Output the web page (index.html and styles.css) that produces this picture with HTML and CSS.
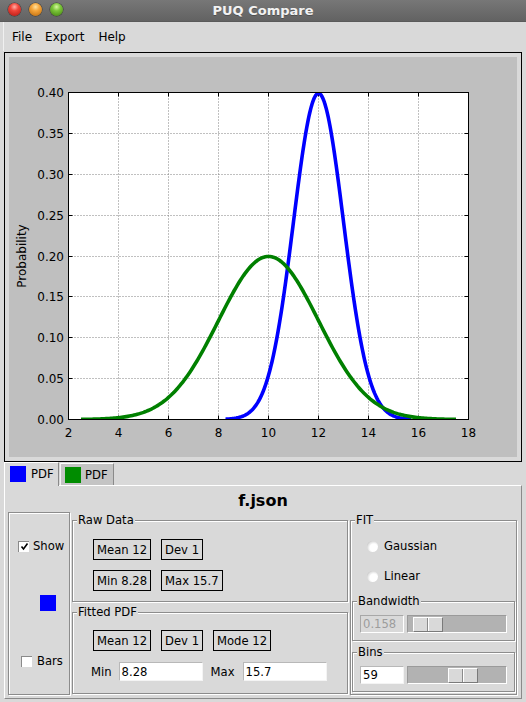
FILE: index.html
```html
<!DOCTYPE html>
<html>
<head>
<meta charset="utf-8">
<title>PUQ Compare</title>
<link rel="stylesheet" href="styles.css">
</head>
<body>
<div class="titlebar">
  <div class="lights"><span class="light red"></span><span class="light orange"></span><span class="light green"></span></div>
  <div class="title">PUQ Compare</div>
  <div></div>
</div>
<div class="menubar"><span>File</span><span>Export</span><span>Help</span></div>
<div class="plotframe">
  <svg class="plot" width="508" height="400" viewBox="0 0 508 400">
    <defs><clipPath id="axclip"><rect x="59.5" y="35.5" width="400" height="327"/></clipPath></defs>
    <rect width="508" height="400" fill="#bfbfbf"/>
    <rect x="59.5" y="35.5" width="400" height="327" fill="#fff"/>
    <g stroke="#808080" stroke-width="1" stroke-dasharray="1 2">
      <path d="M109.5 35.5V362.5M159.5 35.5V362.5M209.5 35.5V362.5M259.5 35.5V362.5M309.5 35.5V362.5M359.5 35.5V362.5M409.5 35.5V362.5"/>
      <path d="M59.5 321.5H459.5M59.5 280.5H459.5M59.5 239.5H459.5M59.5 199.5H459.5M59.5 158.5H459.5M59.5 117.5H459.5M59.5 76.5H459.5"/>
    </g>
    <g stroke="#000" stroke-width="1">
      <path d="M109.5 362.5v-4M159.5 362.5v-4M209.5 362.5v-4M259.5 362.5v-4M309.5 362.5v-4M359.5 362.5v-4M409.5 362.5v-4"/>
      <path d="M109.5 35.5v4M159.5 35.5v4M209.5 35.5v4M259.5 35.5v4M309.5 35.5v4M359.5 35.5v4M409.5 35.5v4"/>
      <path d="M59.5 321.5h4M59.5 280.5h4M59.5 239.5h4M59.5 199.5h4M59.5 158.5h4M59.5 117.5h4M59.5 76.5h4"/>
      <path d="M459.5 321.5h-4M459.5 280.5h-4M459.5 239.5h-4M459.5 199.5h-4M459.5 158.5h-4M459.5 117.5h-4M459.5 76.5h-4"/>
    </g>
    <g clip-path="url(#axclip)" fill="none" stroke-width="3.6" stroke-linejoin="round">
      <path id="curve-blue" stroke="#0000ff" d=""/>
      <path id="curve-green" stroke="#008000" d=""/>
    </g>
    <rect x="59.5" y="35.5" width="400" height="327" fill="none" stroke="#000"/>
    <g class="ticklabels" text-anchor="end">
      <text x="55" y="40">0.40</text>
      <text x="55" y="81">0.35</text>
      <text x="55" y="122">0.30</text>
      <text x="55" y="163">0.25</text>
      <text x="55" y="204">0.20</text>
      <text x="55" y="244">0.15</text>
      <text x="55" y="285">0.10</text>
      <text x="55" y="326">0.05</text>
      <text x="55" y="367">0.00</text>
    </g>
    <g class="ticklabels" text-anchor="middle">
      <text x="59.5" y="380">2</text>
      <text x="109.5" y="380">4</text>
      <text x="159.5" y="380">6</text>
      <text x="209.5" y="380">8</text>
      <text x="259.5" y="380">10</text>
      <text x="309.5" y="380">12</text>
      <text x="359.5" y="380">14</text>
      <text x="409.5" y="380">16</text>
      <text x="459.5" y="380">18</text>
    </g>
    <text class="ticklabels" x="0" y="0" text-anchor="middle" transform="translate(17 199) rotate(-90)">Probability</text>
  </svg>
</div>
<div class="tabs">
  <div class="tab active"><span class="swatch swatch-blue"></span><span class="tab-label">PDF</span></div>
  <div class="tab inactive"><span class="swatch swatch-green"></span><span class="tab-label">PDF</span></div>
</div>
<div class="panel">
  <div class="panel-title">f.json</div>
  <div class="groups">
    <div class="showbox">
      <div class="check-row show-row"><span class="checkbox"><svg width="9" height="9" viewBox="0 0 9 9"><path d="M1.5 4.5 L3.5 7 L7.5 1.5" fill="none" stroke="#000" stroke-width="1.6"/></svg></span><span>Show</span></div>
      <span class="color-square"></span>
      <div class="check-row bars-row"><span class="checkbox"></span><span>Bars</span></div>
    </div>
    <div class="midcol">
      <div class="group raw">
        <span class="gtitle">Raw Data</span>
        <div class="stat-row"><span class="stat">Mean 12</span><span class="stat">Dev 1</span></div>
        <div class="stat-row"><span class="stat">Min 8.28</span><span class="stat">Max 15.7</span></div>
      </div>
      <div class="group fitted">
        <span class="gtitle">Fitted PDF</span>
        <div class="stat-row"><span class="stat">Mean 12</span><span class="stat">Dev 1</span><span class="stat">Mode 12</span></div>
        <div class="field-row"><span class="flabel min">Min</span><span class="entry">8.28</span><span class="flabel max">Max</span><span class="entry">15.7</span></div>
      </div>
    </div>
    <div class="group fit">
      <span class="gtitle">FIT</span>
      <div class="radio-row"><span class="radio"></span><span>Gaussian</span></div>
      <div class="radio-row second"><span class="radio"></span><span>Linear</span></div>
      <div class="group sub bandwidth">
        <span class="gtitle">Bandwidth</span>
        <span class="entry small disabled">0.158</span>
        <span class="slider"><span class="handle" style="margin-left:5px"><span class="grip"></span></span></span>
      </div>
      <div class="group sub bins">
        <span class="gtitle">Bins</span>
        <span class="entry small">59</span>
        <span class="slider"><span class="handle" style="margin-left:40px"><span class="grip"></span></span></span>
      </div>
    </div>
  </div>
</div>
<script src="script.js"></script>
</body>
</html>
```

FILE: styles.css
```css
* { box-sizing: border-box; }
html, body { margin: 0; padding: 0; }
body {
  width: 526px;
  height: 702px;
  overflow: hidden;
  background: #d9d9d9;
  font-family: "DejaVu Sans", "Liberation Sans", sans-serif;
  font-size: 11.6px;
  color: #000;
}

/* title bar */
.titlebar {
  height: 22px;
  display: grid;
  grid-template-columns: 1fr auto 1fr;
  align-items: center;
  background: linear-gradient(#777777, #626262);
  border-bottom: 1px solid #5a5a5a;
}
.lights { display: flex; gap: 8px; padding-left: 8px; padding-bottom: 2px; }
.light { width: 13px; height: 13px; border-radius: 50%; box-shadow: 0 0 0 0.5px rgba(0,0,0,0.45); }
.light.red { background: radial-gradient(circle at 50% 30%, #ffb0a8 0, #f0453a 35%, #b0140e 100%); }
.light.orange { background: radial-gradient(circle at 50% 30%, #ffe2a0 0, #f5a53a 35%, #b86608 100%); }
.light.green { background: radial-gradient(circle at 50% 30%, #d8f7a0 0, #7cc63a 35%, #3f7d0c 100%); }
.title {
  color: #f2f2f2;
  font-weight: bold;
  font-size: 13px;
  padding-bottom: 1px;
  text-shadow: 0 1px 0 rgba(0,0,0,0.25);
}

/* menu */
.menubar {
  height: 29px;
  display: flex;
  align-items: center;
  gap: 13px;
  font-size: 12px;
  border-left: 1px solid #f0f0f0;
  margin-left: 3px;
  padding-left: 8px;
}
.menubar span:last-child { margin-left: 1px; }

/* plot */
.plotframe {
  margin: 1px 4px 0 4px;
  border: 1px solid #000;
  padding: 4px;
  background: #d9d9d9;
  line-height: 0;
}
.plot { display: block; }
.ticklabels, .ticklabels text {
  font-family: "DejaVu Sans", sans-serif;
  font-size: 12px;
  fill: #000;
}

/* tabs */
.tabs {
  display: flex;
  align-items: flex-end;
  height: 23px;
  padding-left: 4px;
  position: relative;
  z-index: 1;
}
.tab {
  display: flex;
  align-items: center;
  font-size: 11.6px;
}
.tab.active {
  width: 55px;
  height: 24px;
  margin-bottom: -1px;
  background: #d9d9d9;
  border-left: 1px solid #fff;
  border-top: 1px solid #fff;
  border-right: 1px solid #8a8a8a;
  padding-left: 5px;
  padding-bottom: 1px;
}
.tab.inactive {
  width: 54px;
  height: 22px;
  margin-left: 1px;
  background: #c4c4c4;
  border-left: 1px solid #f4f4f4;
  border-top: 1px solid #fff;
  border-right: 1px solid #8a8a8a;
  padding-left: 4px;
}
.swatch { width: 16px; height: 16px; display: inline-block; }
.swatch-blue { background: #0000ff; }
.swatch-green { background: #008c00; }
.tab-label { margin-left: 5px; }
.tab.inactive .tab-label { margin-left: 4px; }

/* panel */
.panel {
  margin: 0 4px;
  height: 214px;
  border-top: 1px solid #fff;
  border-left: 1px solid #fff;
  border-right: 1px solid #8a8a8a;
  border-bottom: 1px solid #8a8a8a;
}
.panel-title {
  height: 26px;
  padding-top: 3px;
  line-height: 23px;
  text-align: center;
  font-weight: bold;
  font-size: 16px;
}
.groups {
  display: flex;
  gap: 2px;
  padding: 0 4px 0 3px;
}

/* etched group boxes */
.group, .showbox {
  position: relative;
  border: 1px solid #8c8c8c;
  box-shadow: inset 1px 1px 0 #fff, 1px 1px 0 #fff;
}
.gtitle {
  position: absolute;
  top: -8px;
  left: 4px;
  height: 14px;
  line-height: 14px;
  padding: 0 1px;
  background: #d9d9d9;
  white-space: nowrap;
}

/* show box */
.showbox {
  width: 62px;
  height: 183px;
  display: flex;
  flex-direction: column;
  align-items: flex-start;
  padding: 27px 0 0 9px;
}
.check-row { display: flex; align-items: center; height: 12px; }
.checkbox {
  width: 11px;
  height: 11px;
  background: #fff;
  border-top: 1px solid #8a8a8a;
  border-left: 1px solid #8a8a8a;
  display: flex;
  align-items: center;
  justify-content: center;
}
.show-row .checkbox { margin-right: 4px; }
.bars-row { margin-top: 44px; margin-left: 3px; }
.bars-row .checkbox { margin-right: 5px; }
.color-square {
  width: 16px;
  height: 16px;
  background: #0000ff;
  margin-top: 43px;
  margin-left: 22px;
}

/* middle column */
.midcol {
  width: 276px;
  display: flex;
  flex-direction: column;
  gap: 10px;
  padding-top: 8px;
}
.group.raw {
  height: 82px;
  padding: 18px 0 0 20px;
  display: flex;
  flex-direction: column;
  gap: 10px;
}
.group.fitted {
  height: 82px;
  padding: 17px 0 0 20px;
  display: flex;
  flex-direction: column;
  gap: 11px;
}
.stat-row { display: flex; gap: 10px; }
.stat {
  height: 21px;
  border: 1px solid #000;
  padding: 0 3px;
  display: inline-flex;
  align-items: center;
  white-space: nowrap;
}
.field-row { display: flex; align-items: center; margin-left: -2px; }
.flabel.min { margin-right: 7px; }
.flabel.max { margin-left: 8px; margin-right: 8px; }
.entry {
  width: 84px;
  height: 19px;
  background: #fff;
  border: 1px solid #f4f4f4;
  border-top-color: #b8b8b8;
  border-left-color: #b8b8b8;
  padding-left: 2px;
  display: flex;
  align-items: center;
}

/* FIT box */
.group.fit {
  width: 167px;
  height: 175px;
  margin-top: 8px;
  padding: 19px 1px 0 1px;
  display: flex;
  flex-direction: column;
}
.radio-row {
  display: flex;
  align-items: center;
  gap: 6px;
  height: 12px;
  margin-left: 15px;
}
.radio-row.second { margin-top: 18px; }
.radio {
  width: 11px;
  height: 11px;
  border-radius: 50%;
  background: radial-gradient(circle at 62% 62%, #fff 0, #fff 40%, #e0e0e0 65%, #9a9a9a 100%);
}
.group.sub {
  height: 40px;
  padding: 13px 0 0 7px;
  display: flex;
  align-items: flex-start;
  gap: 3px;
}
.group.sub.bandwidth { margin-top: 19px; }
.group.sub.bins { margin-top: 11px; }
.entry.small { width: 44px; height: 18px; }
.entry.disabled { background: #d9d9d9; color: #9c9c9c; border-color: #fff; border-top-color: #a8a8a8; border-left-color: #a8a8a8; }
.slider {
  width: 100px;
  height: 18px;
  background: #b2b2b2;
  border: 1px solid #fff;
  border-top-color: #9a9a9a;
  border-left-color: #9a9a9a;
  display: flex;
  align-items: center;
}
.handle {
  width: 30px;
  height: 15px;
  background: #d9d9d9;
  border: 1px solid #7a7a7a;
  border-top-color: #fff;
  border-left-color: #fff;
  display: flex;
  justify-content: center;
}
.grip {
  width: 2px;
  height: 100%;
  border-left: 1px solid #8a8a8a;
  border-right: 1px solid #fff;
}
```

FILE: script.js
```js
function pdf(x, m, s) {
  return Math.exp(-(x - m) * (x - m) / (2 * s * s)) / (s * Math.sqrt(2 * Math.PI));
}
function build(id, m, s, a, b) {
  var d = '';
  var n = 240;
  for (var i = 0; i <= n; i++) {
    var x = a + (b - a) * i / n;
    var px = 59.5 + (x - 2) * 25;
    var py = 362.5 - pdf(x, m, s) * 817.5;
    d += (i ? 'L' : 'M') + px.toFixed(2) + ' ' + py.toFixed(2);
  }
  document.getElementById(id).setAttribute('d', d);
}
build('curve-blue', 12, 1, 8.28, 15.7);
build('curve-green', 10, 2, 2.5, 17.5);
```
